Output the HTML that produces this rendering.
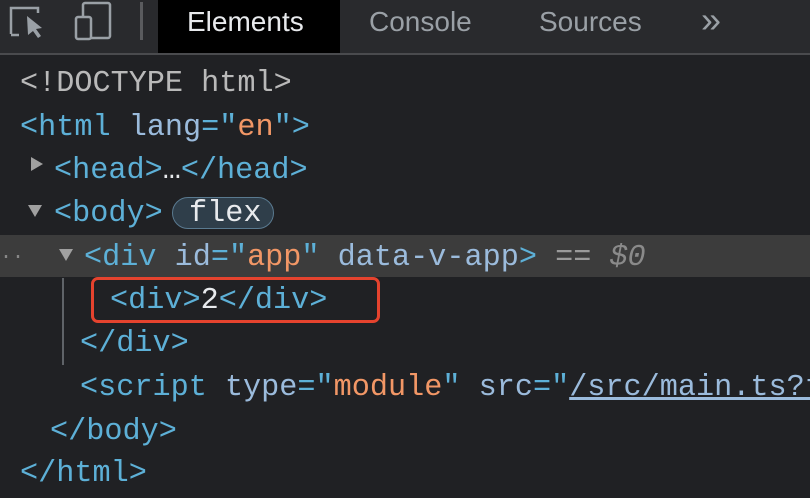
<!DOCTYPE html>
<html><head><style>
body{margin:0;width:810px;height:498px;background:#202124;overflow:hidden;position:relative;font-family:"Liberation Mono",monospace;}
.tb{position:absolute;left:0;top:0;width:810px;height:53px;background:#292a2d;border-bottom:2px solid #4a4b4e;}
.tab{position:absolute;top:0;height:53px;line-height:44px;font-family:"Liberation Sans",sans-serif;font-size:28px;color:#9aa0a6;}
.l{position:absolute;height:44px;line-height:44px;font-size:30.2px;white-space:pre;color:#b9b9b9;}
.t{color:#5db0d7}.a{color:#9bbbdc}.v{color:#f29766}.w{color:#e8eaed}
.tri{position:absolute;width:0;height:0;border-left:7px solid transparent;border-right:7px solid transparent;border-top:12px solid #a0a0a0;}
.trr{position:absolute;width:0;height:0;border-top:7px solid transparent;border-bottom:7px solid transparent;border-left:12px solid #a0a0a0;}
</style></head><body>
<div class="tb">
<svg width="150" height="53" style="position:absolute;left:0;top:0">
<path d="M11 34 V8 H38 V13" fill="none" stroke="#9aa0a6" stroke-width="2.5"/>
<path d="M11 35 H19" fill="none" stroke="#9aa0a6" stroke-width="2.5"/>
<path d="M27 16 L42 28 L36 29 L41 36 L38 38 L33 31 L28 35 Z" fill="#9aa0a6"/>
<rect x="83" y="3" width="27" height="35" rx="2" fill="none" stroke="#9aa0a6" stroke-width="2.5"/>
<rect x="76" y="17" width="15" height="22" rx="2" fill="#292a2d" stroke="#9aa0a6" stroke-width="2.5"/>
<rect x="140" y="2" width="3" height="38" fill="#5a5b5e"/>
</svg>
<div style="position:absolute;left:158px;top:0;width:182px;height:53px;background:#000"></div>
<div class="tab" style="left:187px;color:#e8eaed">Elements</div>
<div class="tab" style="left:369px">Console</div>
<div class="tab" style="left:539px">Sources</div>
<div class="tab" style="left:701px;font-size:36px;line-height:40px">»</div>
</div>
<div style="position:absolute;left:0;top:235px;width:810px;height:42px;background:#3c3c3c"></div>
<div style="position:absolute;left:62px;top:278px;width:2px;height:87px;background:#5f6368"></div>
<div style="position:absolute;left:91px;top:277px;width:283px;height:40px;border:3px solid #e5432e;border-radius:7px"></div>
<div class="l" style="left:20px;top:62px">&lt;!DOCTYPE html&gt;</div>
<div class="l" style="left:20px;top:106px"><span class="t">&lt;html</span> <span class="a">lang</span><span class="t">="</span><span class="v">en</span><span class="t">"&gt;</span></div>
<div class="trr" style="left:31px;top:157px"></div>
<div class="l" style="left:54px;top:149px"><span class="t">&lt;head&gt;</span><span class="w">…</span><span class="t">&lt;/head&gt;</span></div>
<div class="tri" style="left:28px;top:205px"></div>
<div class="l t" style="left:54px;top:192px">&lt;body&gt;</div>
<div style="position:absolute;left:172px;top:197px;width:100px;height:30px;border:1.5px solid #5a7a90;border-radius:16px;background:#2f3e4a"></div>
<div class="l w" style="left:189px;top:192px">flex</div>
<div class="l" style="left:0;top:236px;color:#888;font-size:20px">··</div>
<div class="tri" style="left:59px;top:249px"></div>
<div class="l" style="left:84px;top:236px"><span class="t">&lt;div</span> <span class="a">id</span><span class="t">="</span><span class="v">app</span><span class="t">"</span> <span class="a">data-v-app</span><span class="t">&gt;</span> <span style="color:#9a9a9a">==</span> <i style="color:#8a8a8a">$0</i></div>
<div class="l" style="left:110px;top:279px"><span class="t">&lt;div&gt;</span><span class="w">2</span><span class="t">&lt;/div&gt;</span></div>
<div class="l t" style="left:80px;top:322px">&lt;/div&gt;</div>
<div class="l" style="left:80px;top:366px"><span class="t">&lt;script</span> <span class="a">type</span><span class="t">="</span><span class="v">module</span><span class="t">"</span> <span class="a">src</span><span class="t">="</span><span class="a" style="text-decoration:underline">/src/main.ts?t</span></div>
<div class="l t" style="left:50px;top:410px">&lt;/body&gt;</div>
<div class="l t" style="left:20px;top:452px">&lt;/html&gt;</div>
</body></html>
